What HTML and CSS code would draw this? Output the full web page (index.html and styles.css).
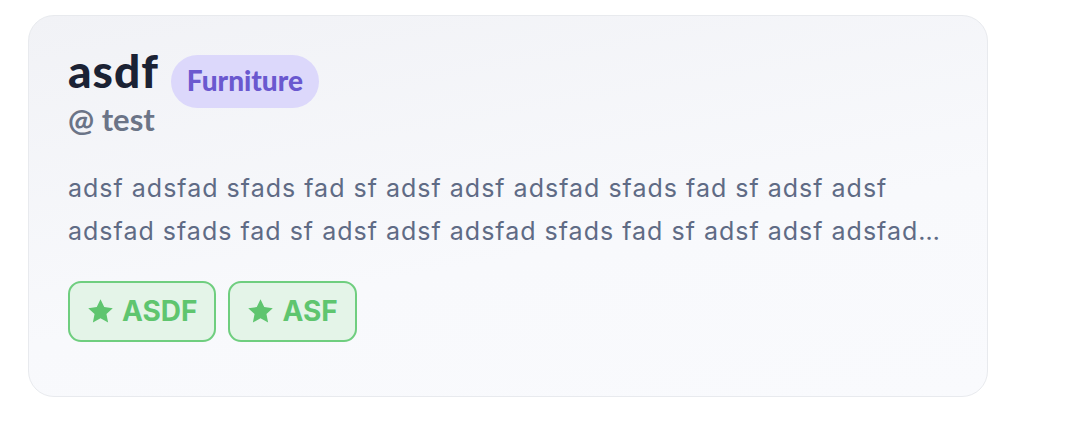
FILE: index.html
```html
<!DOCTYPE html>
<html>
<head>
<meta charset="utf-8">
<link rel="stylesheet" href="styles.css">
</head>
<body>
<div class="page">
  <div class="card">
    <div class="head">
      <div class="title-row">
        <h1 class="title">asdf</h1>
        <span class="category">Furniture</span>
      </div>
      <div class="handle">@ test</div>
    </div>
    <p class="desc">adsf adsfad sfads fad sf adsf adsf adsfad sfads fad sf adsf adsf adsfad sfads fad sf adsf adsf adsfad sfads fad sf adsf adsf adsfad sfads fad sf adsf adsf adsfad sfads fad sf adsf adsf</p>
    <div class="tags">
      <span class="tag"><svg class="star" viewBox="0 0 24 24"><path d="M12 2.5l2.9 6.1 6.6.8-4.9 4.6 1.3 6.6L12 17.3l-5.9 3.3 1.3-6.6-4.9-4.6 6.6-.8z"/></svg>ASDF</span>
      <span class="tag"><svg class="star" viewBox="0 0 24 24"><path d="M12 2.5l2.9 6.1 6.6.8-4.9 4.6 1.3 6.6L12 17.3l-5.9 3.3 1.3-6.6-4.9-4.6 6.6-.8z"/></svg>ASF</span>
    </div>
  </div>
</div>
</body>
</html>
```

FILE: styles.css
```css
* { box-sizing: border-box; }
html, body { margin: 0; padding: 0; background: #ffffff; }
body { font-family: Inter, "Liberation Sans", sans-serif; }
.page { padding: 15px 0 0 28px; }
.card {
  width: 960px;
  height: 382px;
  border: 1.5px solid #e8eaee;
  border-radius: 26px;
  background: linear-gradient(170deg, #f1f2f6 0%, #f8f9fc 60%, #f9fafd 100%);
  padding: 38.5px 40px 0 39px;
  display: flex;
  flex-direction: column;
}
.head { display: flex; flex-direction: column; }
.title-row { display: flex; align-items: flex-start; gap: 12px; height: 53px; }
.title {
  margin: -7px 0 0 0;
  font-family: Lato, "Open Sans", sans-serif;
  font-weight: 900;
  font-size: 46px;
  letter-spacing: 1px;
  color: #1b2234;
  line-height: 45px;
}
.category {
  display: inline-flex;
  align-items: center;
  height: 53px;
  padding: 0 16px 3px 16px;
  border-radius: 27px;
  background: #dcd8fb;
  color: #6a58cf;
  font-family: Lato, "Open Sans", sans-serif;
  font-weight: 900;
  font-size: 28px;
}
.handle {
  margin-top: -5px;
  font-family: Lato, "Open Sans", sans-serif;
  font-weight: 700;
  font-size: 31px;
  line-height: 32px;
  color: #6b7487;
}
.desc {
  margin: 32px 0 0 0;
  font-size: 25px;
  letter-spacing: 1px;
  line-height: 43.5px;
  color: #5f6b85;
  display: -webkit-box;
  -webkit-line-clamp: 2;
  -webkit-box-orient: vertical;
  overflow: hidden;
  width: 885px;
}
.tags { display: flex; gap: 12px; margin-top: 27px; }
.tag {
  display: inline-flex;
  align-items: center;
  gap: 6px;
  height: 61px;
  padding: 0 17px 0 15px;
  border: 2px solid #6fce7f;
  border-radius: 13px;
  background: #e4f4e8;
  color: #5fc56f;
  font-weight: 700;
  font-size: 28px;
}
.star { width: 31px; height: 31px; fill: #5fc56f; }
```
